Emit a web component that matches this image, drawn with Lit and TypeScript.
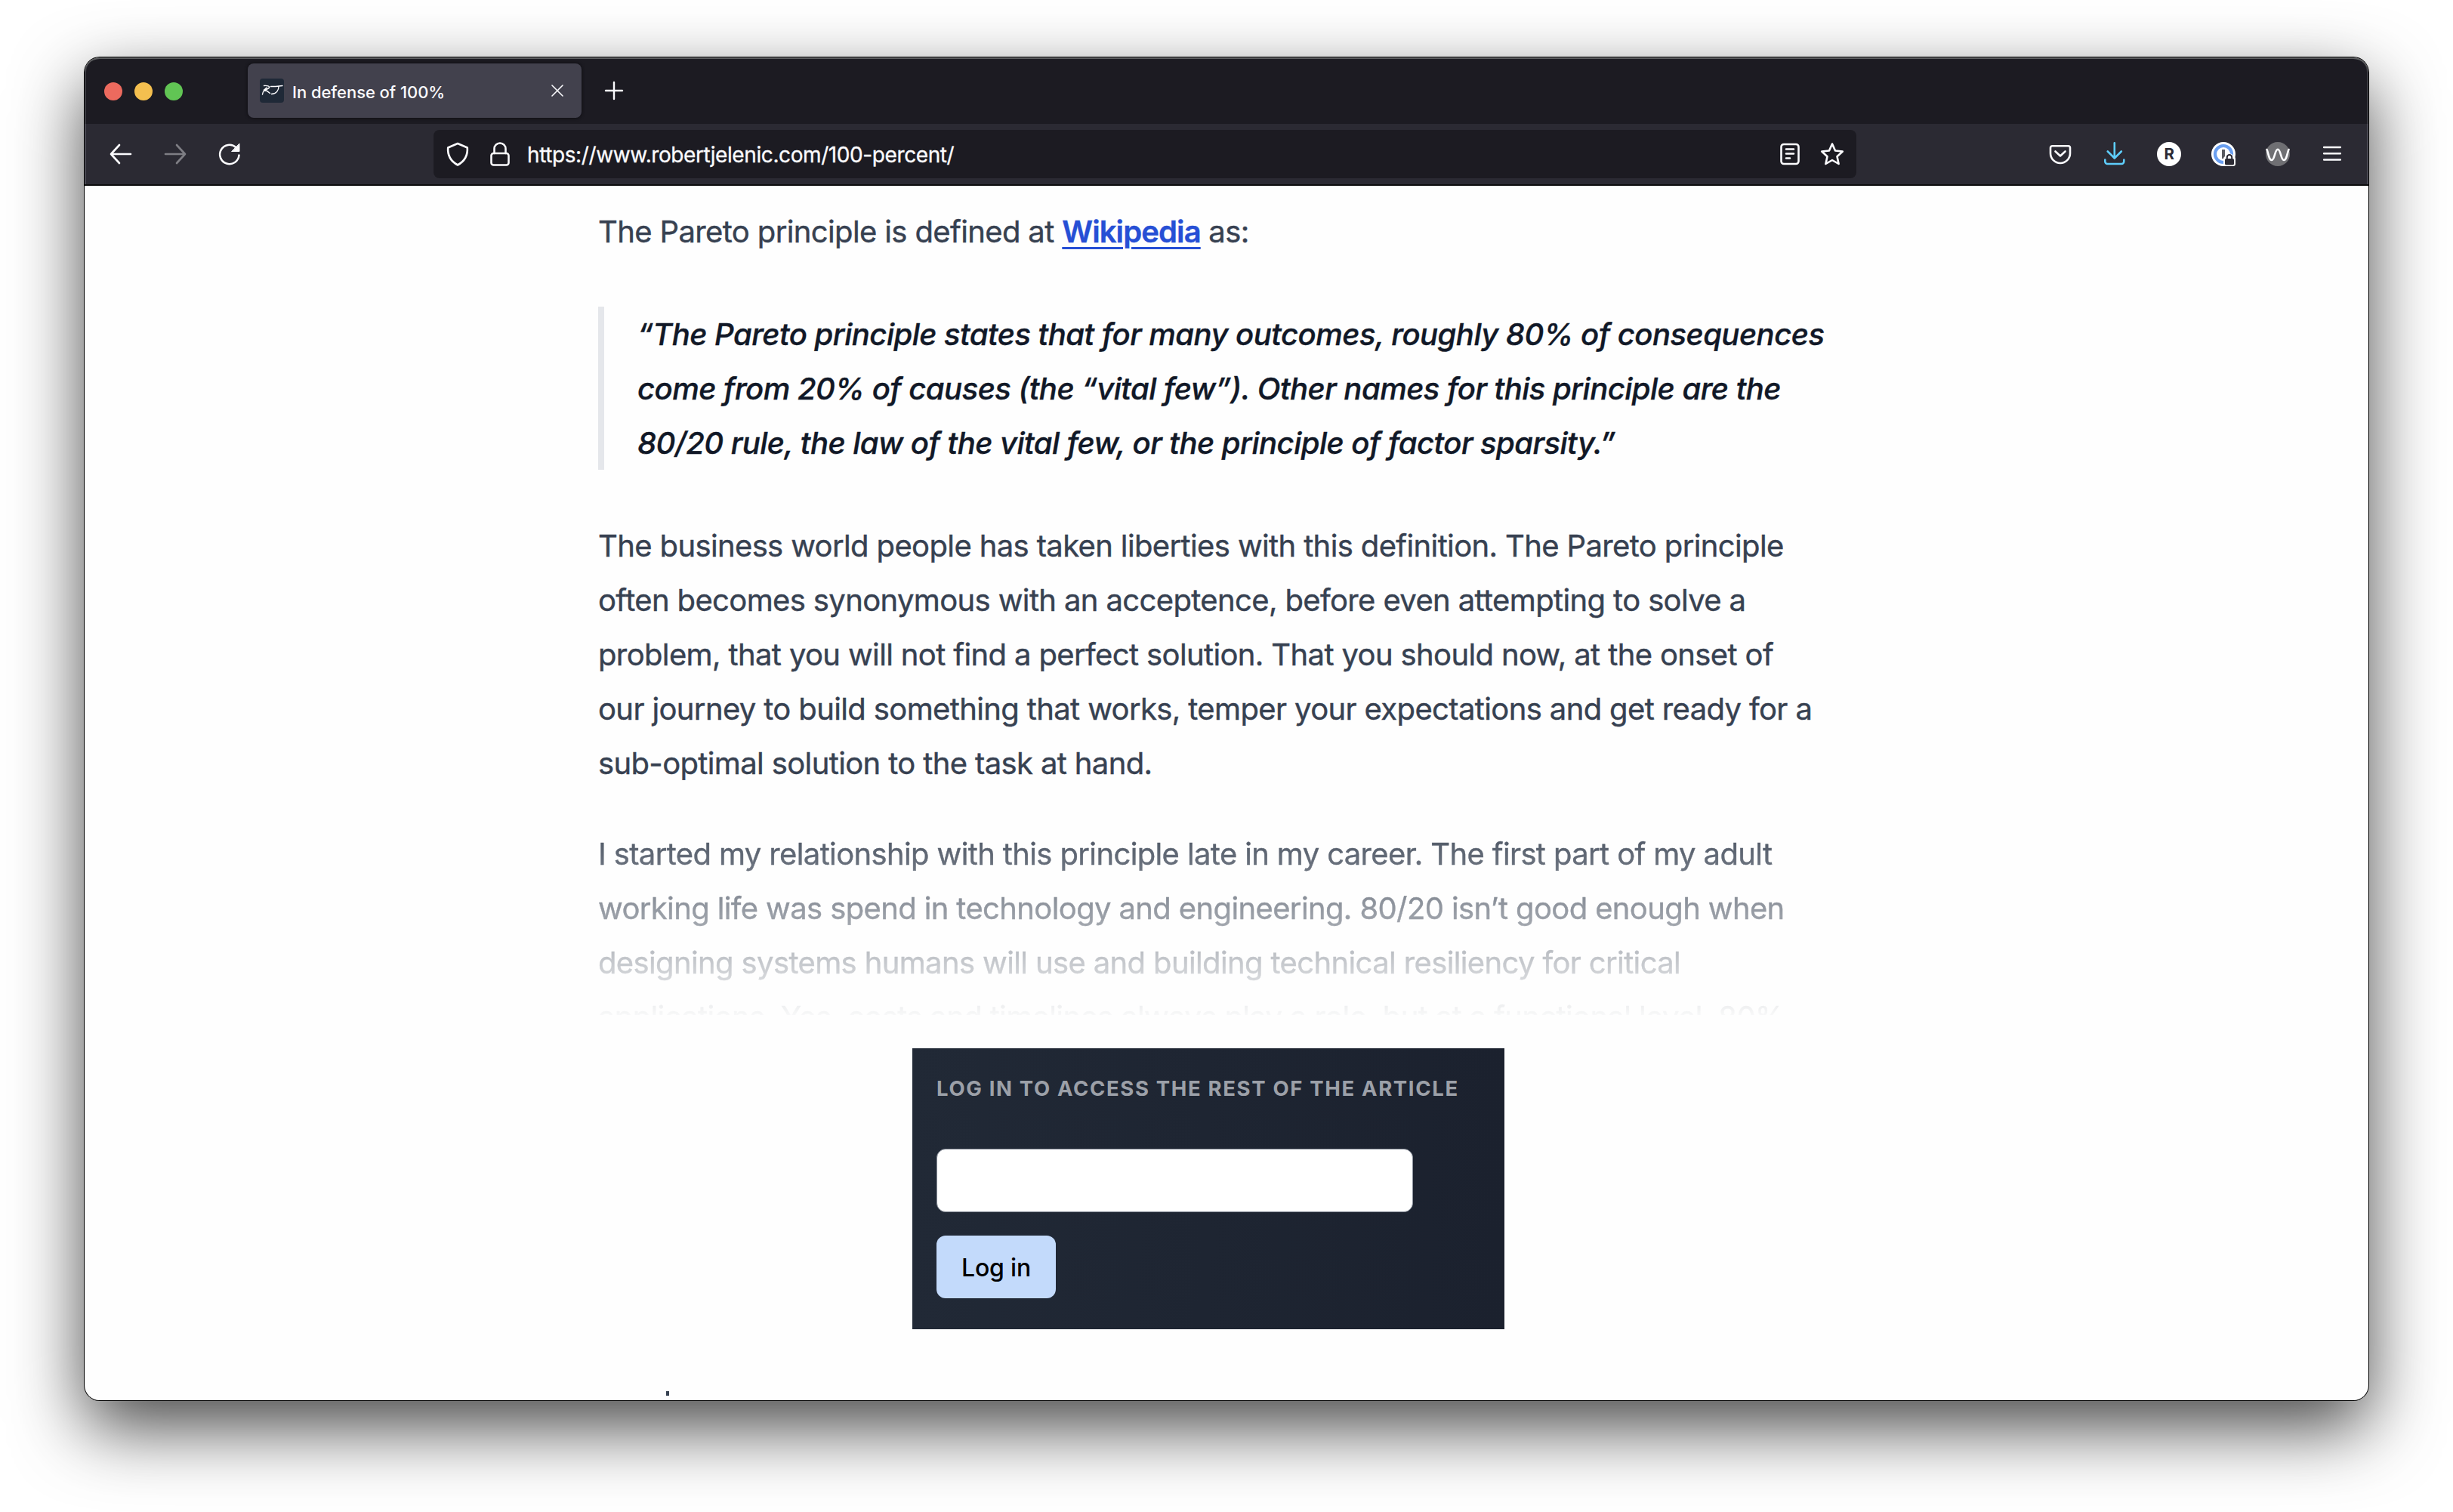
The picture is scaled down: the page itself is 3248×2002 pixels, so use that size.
import { LitElement, html, css, svg } from 'lit';
import { customElement } from 'lit/decorators.js';

const icon = (size: number, box: string, body: unknown, cls = '') => html`
  <svg class="icon ${cls}" width=${size} height=${size} viewBox=${box} fill="none"
    stroke="currentColor" stroke-width="2.6" stroke-linecap="round" stroke-linejoin="round">${body}</svg>
`;

const back = svg`<path d="M29 16H3M14 4L3 16l11 12"/>`;
const forward = svg`<path d="M3 16h26M18 4l11 12-11 12"/>`;
const reload = svg`<path d="M28.500 17.500A12.700 12.700 0 1 1 24.500 7.200"/><path d="M29 2.500v10H19z" fill="currentColor" stroke-width="1"/>`;
const shield = svg`<path d="M16 2L28.800 7.500C29.500 17 26 25 16 30.500 6 25 2.500 17 3.200 7.500z"/>`;
const lock = svg`<rect x="4.500" y="15" width="23" height="15.500" rx="3"/><path d="M8.500 15V9a7.500 7.500 0 0 1 15 0v6"/>`;
const reader = svg`<rect x="4.500" y="3" width="23" height="26" rx="3.500"/><path d="M11 9.500h10M11 15.500h10M11 21.500h5"/>`;
const star = svg`<path d="M16 2.500l4 9 9.800 1-7.300 6.700 2.100 9.800-8.600-5-8.600 5 2.100-9.800L2.200 12.500l9.800-1z"/>`;
const pocket = svg`<path d="M5.500 5.200h21a2.500 2.500 0 0 1 2.500 2.500V15a13 13 0 0 1-26 0V7.700a2.500 2.500 0 0 1 2.500-2.500z"/><path d="M9.500 12.500l6.500 6 6.500-6"/>`;
const download = svg`<path d="M15.800 1.300v20M6.800 12.500l9 9 9-9M3.300 23.500v2.300a3.200 3.200 0 0 0 3.200 3.200h18.600a3.200 3.200 0 0 0 3.200-3.200v-2.300"/>`;
const menu = svg`<path d="M5.200 7h21.600M5.200 15.300h21.600M5.200 23.500h21.600"/>`;

@customElement('browser-chrome')
export class BrowserChrome extends LitElement {
  static styles = css`
    :host {
      display: block;
      color: #fbfbfe;
      font-family: Inter, sans-serif;
    }

    .tabs {
      display: flex;
      align-items: center;
      height: 88px;
      padding: 0 26px;
      box-sizing: border-box;
      border-radius: 20px 20px 0 0;
      background: #1c1b22;
      box-shadow: inset 0 2px #5d5e60, inset 2px 0 #3c3c42, inset -2px 0 #3c3c42;
    }

    .lights {
      display: flex;
      gap: 16px;
      width: 190px;
      padding-top: 1px;
    }

    .light {
      width: 24px;
      height: 24px;
      border-radius: 50%;
    }

    .close { background: #ec6a5e; }
    .min { background: #f4bf4f; }
    .max { background: #61c554; }

    .tab {
      display: flex;
      align-items: center;
      width: 442px;
      height: 72px;
      padding: 0 16px;
      box-sizing: border-box;
      border-radius: 8px;
      background: #42414d;
      box-shadow: 0 0 4px #0a0a0e;
    }

    .title {
      flex: 1;
      margin-left: 11px;
      padding-top: 3px;
      font-size: 22px;
      font-weight: 500;
      letter-spacing: -0.05px;
      white-space: nowrap;
    }

    .dismiss { margin-right: 8px; }
    .plus { margin-left: 30px; }

    .toolbar {
      display: flex;
      align-items: center;
      height: 82px;
      padding: 0 32px;
      box-sizing: border-box;
      border-bottom: 2px solid #0c0c0d;
      background: #2b2a33;
      box-shadow: inset 2px 0 #4a4952, inset -2px 0 #4a4952;
    }

    .nav {
      display: flex;
      gap: 40px;
      width: 430px;
    }

    .off { opacity: 0.4; }

    .address {
      display: flex;
      align-items: center;
      width: 1884px;
      height: 64px;
      padding: 0 16px;
      box-sizing: border-box;
      border-radius: 8px;
      background: #1c1b22;
    }

    .lock { margin-left: 24px; }

    .url {
      flex: 1;
      margin-left: 20px;
      padding-top: 2px;
      font-size: 28px;
      letter-spacing: -0.4px;
      white-space: nowrap;
      -webkit-text-stroke: 0.3px currentColor;
    }

    .star { margin-left: 24px; }

    .actions {
      display: flex;
      gap: 40px;
      margin-left: auto;
    }

    .blue { color: #5ecdfb; }

    .icon {
      display: block;
      flex: none;
    }
  `;

  render() {
    return html`
      <div class="tabs">
        <div class="lights">
          <div class="light close"></div>
          <div class="light min"></div>
          <div class="light max"></div>
        </div>
        <div class="tab">
          ${icon(32, '0 0 32 32', svg`
            <rect width="32" height="32" rx="4" fill="#1f2937" stroke="none"/>
            <path d="M3.500 21C4 17.500 6 14.500 9 12M5.500 9.500c4-.5 8 .5 7 2.500-1 1.500-4 2.500-7 3 3 .5 6 2.500 8 4.500M14.500 10.500H21l9-1M25 10.500c0 5-3 9.500-9.500 10" stroke-width="1.400"/>
          `)}
          <span class="title">In defense of 100%</span>
          ${icon(16, '0 0 16 16', svg`<path d="M1 1l14 14M15 1L1 15" stroke-width="1.600"/>`, 'dismiss')}
        </div>
        ${icon(26, '0 0 26 26', svg`<path d="M13 2v22M2 13h22" stroke-width="2.400"/>`, 'plus')}
      </div>
      <div class="toolbar">
        <div class="nav">
          ${icon(32, '0 0 32 32', back)}
          ${icon(32, '0 0 32 32', forward, 'off')}
          ${icon(32, '0 0 32 32', reload)}
        </div>
        <div class="address">
          ${icon(32, '0 0 32 32', shield)}
          ${icon(32, '0 0 32 32', lock, 'lock')}
          <span class="url">https://www.robertjelenic.com/100-percent/</span>
          ${icon(32, '0 0 32 32', reader)}
          ${icon(32, '0 0 32 32', star, 'star')}
        </div>
        <div class="actions">
          ${icon(32, '0 0 32 32', pocket)}
          ${icon(32, '0 0 32 32', download, 'blue')}
          ${icon(32, '0 0 32 32', svg`
            <circle cx="16" cy="16" r="16" fill="#fff" stroke="none"/>
            <text x="16.300" y="23" text-anchor="middle" font-size="20.500" font-weight="700" fill="#2b2a33" stroke="none">R</text>
          `)}
          ${icon(32, '0 0 32 32', svg`
            <circle cx="16" cy="16" r="16" fill="#fff" stroke="none"/>
            <circle cx="16" cy="16" r="11" stroke="#6a9ff0" stroke-width="4.200"/>
            <path d="M16 10v12" stroke="#5a5b60" stroke-width="4" stroke-linecap="butt"/>
            <path d="M16 23c0-3 1.500-3.500 3-4.500 0-4 9-4.500 10 0 2.500 1 3 2 3 4v6.500a3 3 0 0 1-3 3H16z" fill="#fff" stroke="none"/>
            <rect x="18" y="22" width="12" height="8.500" rx="1.800" fill="#2b2a33" stroke="none"/>
            <path d="M20.800 22v-1.800a3.200 3.200 0 0 1 6.400 0V22" stroke="#2b2a33" stroke-width="2"/>
          `)}
          ${icon(32, '0 0 32 32', svg`
            <circle cx="16" cy="16" r="16" fill="#6f6f73" stroke="none"/>
            <path d="M1.500 10C3.500 14 4 24 8 24s4-14.300 8-14.300S20 24 24 24s4.500-10 6.500-14"/>
          `)}
          ${icon(32, '0 0 32 32', menu)}
        </div>
      </div>
    `;
  }
}

@customElement('login-card')
export class LoginCard extends LitElement {
  static styles = css`
    :host {
      display: block;
      width: 784px;
      height: 372px;
      padding: 32px;
      box-sizing: border-box;
      background: linear-gradient(90deg, #212936, #1b212e);
      font-family: Inter, sans-serif;
    }

    .heading {
      margin: 0 0 60px;
      padding-top: 1px;
      color: #9ca0a8;
      font-size: 27.5px;
      font-weight: 700;
      line-height: 40px;
      letter-spacing: 1.65px;
      text-transform: uppercase;
      white-space: nowrap;
    }

    .field {
      display: block;
      width: 631px;
      height: 84px;
      margin-bottom: 31px;
      box-sizing: border-box;
      border: 1px solid #8b919c;
      border-radius: 12px;
      background: #fff;
    }

    .submit {
      display: block;
      width: 158px;
      height: 83px;
      padding: 2px 0 0;
      border: 0;
      border-radius: 12px;
      background: #c3dafb;
      color: #000;
      font: 500 32px Inter, sans-serif;
      letter-spacing: -0.2px;
    }
  `;

  render() {
    return html`
      <h3 class="heading">Log in to access the rest of the article</h3>
      <input class="field" type="text">
      <button class="submit">Log in</button>
    `;
  }
}

@customElement('app-root')
export class AppRoot extends LitElement {
  static styles = css`
    :host {
      display: block;
      height: 2002px;
      padding: 76px 112px 148px;
      box-sizing: border-box;
      overflow: hidden;
      background: #fff;
    }

    .window {
      height: 1778px;
      border-radius: 20px;
      overflow: hidden;
      background: #fefefe;
      box-shadow: 0 0 0 1px #000, 0 36px 94px rgba(0, 0, 0, 0.72);
    }

    .page {
      display: flex;
      flex-direction: column;
      padding: 24px 680px 0;
      color: #374151;
      font: 400 40px/70px Inter, sans-serif;
      letter-spacing: -0.63px;
      -webkit-text-stroke: 0.4px currentColor;
    }

    p { margin: 0; }

    .line {
      display: block;
      width: max-content;
      padding-top: 2px;
      white-space: nowrap;
    }

    a {
      color: #264fd5;
      font-weight: 600;
      letter-spacing: -0.9px;
      text-decoration: underline;
      text-decoration-thickness: 3px;
      text-underline-offset: 6px;
    }

    blockquote {
      margin: 64px 0;
      padding-left: 44px;
      border-left: 8px solid #e5e7eb;
      color: #111827;
      font-style: italic;
      font-weight: 500;
      letter-spacing: -0.53px;
    }

    .faded {
      height: 250px;
      margin-top: 48px;
      overflow: hidden;
      -webkit-mask-image: linear-gradient(rgba(0, 0, 0, 0.93), rgba(0, 0, 0, 0.03));
      mask-image: linear-gradient(rgba(0, 0, 0, 0.93), rgba(0, 0, 0, 0.03));
    }

    login-card {
      margin: 44px 0 0 416px;
      letter-spacing: normal;
      -webkit-text-stroke: 0;
    }

    /* top of the stem of the first line below the fold */
    .sliver {
      width: 4px;
      height: 6px;
      margin: 82px 0 0 90px;
      background: #374151;
    }
  `;

  private lines(list: string[]) {
    return list.map((text) => html`<span class="line">${text}</span>`);
  }

  render() {
    return html`
      <div class="window">
        <browser-chrome></browser-chrome>
        <div class="page">
          <p><span class="line">The Pareto principle is defined at <a>Wikipedia</a> as:</span></p>
          <blockquote>
            ${this.lines([
              '“The Pareto principle states that for many outcomes, roughly 80% of consequences',
              'come from 20% of causes (the “vital few”). Other names for this principle are the',
              '80/20 rule, the law of the vital few, or the principle of factor sparsity.”',
            ])}
          </blockquote>
          <p>
            ${this.lines([
              'The business world people has taken liberties with this definition. The Pareto principle',
              'often becomes synonymous with an acceptence, before even attempting to solve a',
              'problem, that you will not find a perfect solution. That you should now, at the onset of',
              'our journey to build something that works, temper your expectations and get ready for a',
              'sub-optimal solution to the task at hand.',
            ])}
          </p>
          <p class="faded">
            ${this.lines([
              'I started my relationship with this principle late in my career. The first part of my adult',
              'working life was spend in technology and engineering. 80/20 isn’t good enough when',
              'designing systems humans will use and building technical resiliency for critical',
              'applications. Yes, costs and timelines always play a role, but at a functional level, 80%',
            ])}
          </p>
          <login-card></login-card>
          <div class="sliver"></div>
        </div>
      </div>
    `;
  }
}
